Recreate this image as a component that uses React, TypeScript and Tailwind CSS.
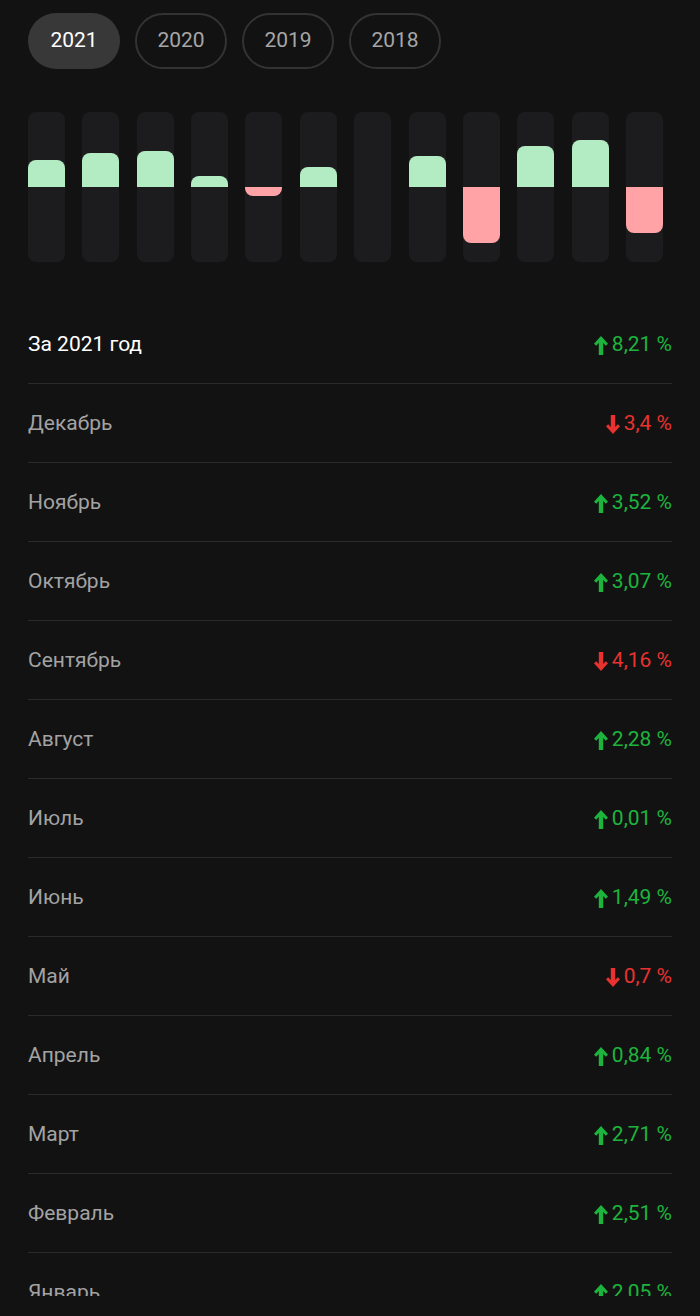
import React from 'react';

// Доходность по месяцам, от декабря к январю
const months = [
  { name: 'Декабрь', value: -3.4 },
  { name: 'Ноябрь', value: 3.52 },
  { name: 'Октябрь', value: 3.07 },
  { name: 'Сентябрь', value: -4.16 },
  { name: 'Август', value: 2.28 },
  { name: 'Июль', value: 0.01 },
  { name: 'Июнь', value: 1.49 },
  { name: 'Май', value: -0.7 },
  { name: 'Апрель', value: 0.84 },
  { name: 'Март', value: 2.71 },
  { name: 'Февраль', value: 2.51 },
  { name: 'Январь', value: 2.05 },
];

const years = ['2021', '2020', '2019', '2018'];

const fmt = (v: number) => Math.abs(v).toString().replace('.', ',') + ' %';

function Arrow({ up }: { up: boolean }) {
  return (
    <svg width="14" height="19" viewBox="0 0 14 19" className={up ? '' : 'rotate-180'}>
      <path d="M7 0 L14 7.8 L11.8 9.8 L9.2 6.9 L9.2 19 L4.8 19 L4.8 6.9 L2.2 9.8 L0 7.8 Z" fill="currentColor" />
    </svg>
  );
}

function Chart() {
  const data = [...months].reverse();
  const scale = 13.4;
  return (
    <div className="w-[635px] flex justify-between mt-[43px]">
      {data.map((m) => {
        const h = Math.round(Math.abs(m.value) * scale);
        const up = m.value >= 0;
        return (
          <div key={m.name} className="w-[37px] h-[150px] rounded-lg bg-[#1c1c1e] flex flex-col overflow-hidden">
            <div className="h-[75px] flex flex-col justify-end">
              {up && h > 1 && (
                <div className="bg-[#b3ebc3] rounded-t-lg" style={{ height: h }} />
              )}
            </div>
            <div className="h-[75px] flex flex-col">
              {!up && <div className="bg-[#ffa3a6] rounded-b-lg" style={{ height: h }} />}
            </div>
          </div>
        );
      })}
    </div>
  );
}

function Row({ label, value, main }: { label: string; value: number; main?: boolean }) {
  const up = value >= 0;
  return (
    <div className="h-[79px] pt-[2px] flex items-center justify-between border-b border-[#2a2a2a]">
      <span className={main ? 'text-white' : 'text-[#a3a3a3]'}>{label}</span>
      <span className={`flex items-center gap-[4px] ${up ? 'text-[#1db43d]' : 'text-[#e8322f]'}`}>
        <Arrow up={up} />
        {fmt(value)}
      </span>
    </div>
  );
}

export default function App() {
  return (
    <div
      className="w-[700px] h-[1316px] bg-[#121212]"
      style={{ fontFamily: 'Roboto, "Noto Sans", sans-serif' }}
    >
      <div className="h-[1296px] overflow-hidden px-[28px] pt-[13px] text-[21px]">
        <div className="flex gap-[15px]">
          {years.map((y, i) => (
            <div
              key={y}
              className={`w-[92px] h-[56px] rounded-full flex items-center justify-center ${
                i === 0 ? 'bg-[#383838] text-white' : 'border-2 border-[#333333] text-[#a6a6a6]'
              }`}
            >
              {y}
            </div>
          ))}
        </div>

        <Chart />

        <div className="mt-[43px]">
          <Row label="За 2021 год" value={8.21} main />
          {months.map((m) => (
            <Row key={m.name} label={m.name} value={m.value} />
          ))}
        </div>
      </div>
    </div>
  );
}
